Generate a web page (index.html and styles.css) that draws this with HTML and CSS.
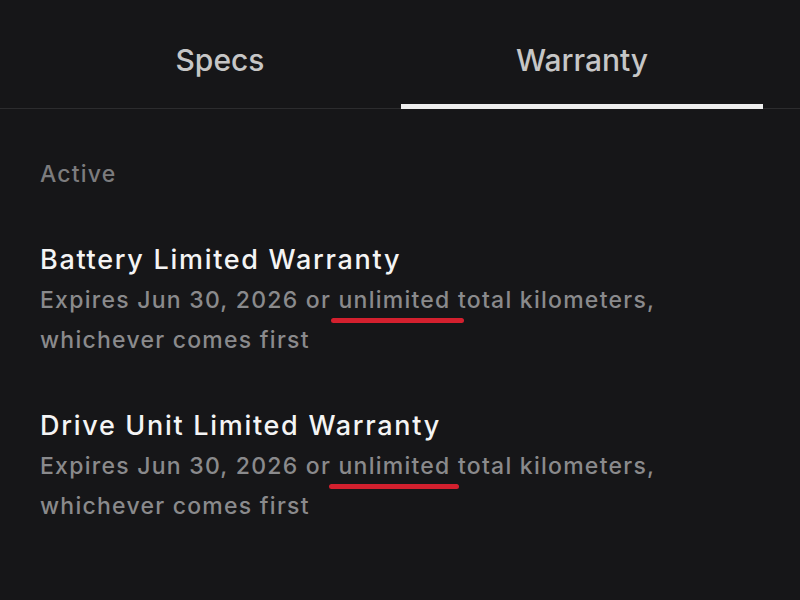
FILE: index.html
```html
<!DOCTYPE html>
<html>
<head>
<meta charset="utf-8">
<link rel="stylesheet" href="styles.css">
</head>
<body>
<div class="tabs">
  <div class="tab">Specs</div>
  <div class="tab active">Warranty</div>
</div>
<div class="content">
  <div class="section-label">Active</div>
  <div class="item">
    <div class="title">Battery Limited Warranty</div>
    <div class="desc">Expires Jun 30, 2026 or <span class="mark">unlimited</span> total kilometers, whichever comes first</div>
  </div>
  <div class="item">
    <div class="title">Drive Unit Limited Warranty</div>
    <div class="desc">Expires Jun 30, 2026 or <span class="mark mark2">unlimited</span> total kilometers, whichever comes first</div>
  </div>
</div>
</body>
</html>
```
FILE: styles.css
```css
html, body {
  margin: 0;
  padding: 0;
  background: #161618;
  width: 800px;
  height: 600px;
  overflow: hidden;
  font-family: Inter, "Noto Sans", sans-serif;
  font-weight: 500;
}
.tabs {
  display: flex;
  padding: 0 37px 0 39px;
  border-bottom: 1px solid #2c2c2e;
  height: 108px;
}
.tab {
  flex: 1;
  display: flex;
  align-items: center;
  justify-content: center;
  padding-top: 16px;
  font-size: 30px;
  color: #c6c6c6;
  border-bottom: 5px solid transparent;
  margin-bottom: -1px;
}
.tab.active {
  border-bottom-color: #eeeeee;
}
.content {
  padding: 45px 40px 0 40px;
}
.section-label {
  font-size: 23px;
  letter-spacing: 1.2px;
  line-height: 40px;
  color: #7c7c7e;
}
.item {
  margin-top: 46px;
}
.title {
  font-size: 27px;
  letter-spacing: 1.7px;
  line-height: 40px;
  color: #f4f4f4;
}
.desc {
  font-size: 23px;
  letter-spacing: 1.25px;
  line-height: 40px;
  color: #8a8a8c;
  width: 640px;
}
.mark {
  position: relative;
}
.mark::after {
  content: "";
  position: absolute;
  left: -7px;
  right: -13px;
  bottom: -9px;
  height: 5px;
  border-radius: 3px;
  background: #d3202e;
}
.mark2::after {
  left: -9px;
  right: -8px;
}
```
